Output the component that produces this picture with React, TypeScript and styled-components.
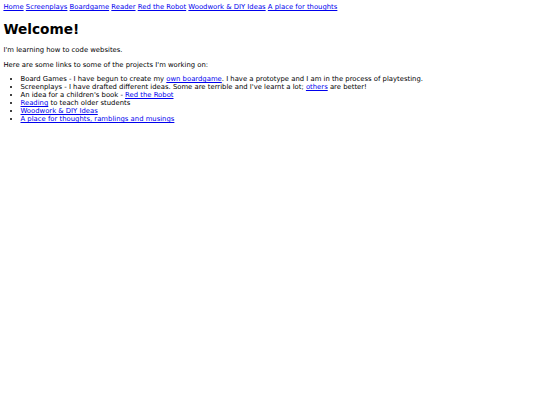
import React from 'react'
import styled, { createGlobalStyle } from 'styled-components'

// the reference is a plain default-styled page, shrunk to about 0.428
const GlobalStyle = createGlobalStyle`
  html, body {
    background: #fff;
  }

  body {
    margin: 3.42px;
    font-family: 'DejaVu Sans', sans-serif;
    font-size: 6.85px;
    color: #000;
  }
`

const Page = styled.div`
  font-size: 6.85px;
  line-height: normal;
`

const Nav = styled.div`
  display: block;
`

const Link = styled.a`
  color: #0000ee;
  text-decoration: underline;
`

const Title = styled.h1`
  font-size: 2em;
  font-weight: bold;
  margin: 0.67em 0;
`

const Para = styled.p`
  margin: 1em 0;
`

const List = styled.ul`
  margin: 1em 0;
  padding-left: 17.1px;
  list-style: disc;
`

const navLinks = [
  'Home',
  'Screenplays',
  'Boardgame',
  'Reader',
  'Red the Robot',
  'Woodwork & DIY Ideas',
  'A place for thoughts',
]

const App: React.FC = () => {
  return (
    <Page>
      <GlobalStyle />
      <Nav>
        {navLinks.map((label, i) => (
          <React.Fragment key={label}>
            {i > 0 && ' '}
            <Link href="#">{label}</Link>
          </React.Fragment>
        ))}
      </Nav>
      <Title>Welcome!</Title>
      <Para>I'm learning how to code websites.</Para>
      <Para>Here are some links to some of the projects I'm working on:</Para>
      <List>
        <li>
          Board Games - I have begun to create my{' '}
          <Link href="#">own boardgame</Link>. I have a prototype and I am in
          the process of playtesting.
        </li>
        <li>
          Screenplays - I have drafted different ideas. Some are terrible and
          I've learnt a lot; <Link href="#">others</Link> are better!
        </li>
        <li>
          An idea for a children's book - <Link href="#">Red the Robot</Link>
        </li>
        <li>
          <Link href="#">Reading</Link> to teach older students
        </li>
        <li>
          <Link href="#">Woodwork &amp; DIY Ideas</Link>
        </li>
        <li>
          <Link href="#">A place for thoughts, ramblings and musings</Link>
        </li>
      </List>
    </Page>
  )
}

export default App
